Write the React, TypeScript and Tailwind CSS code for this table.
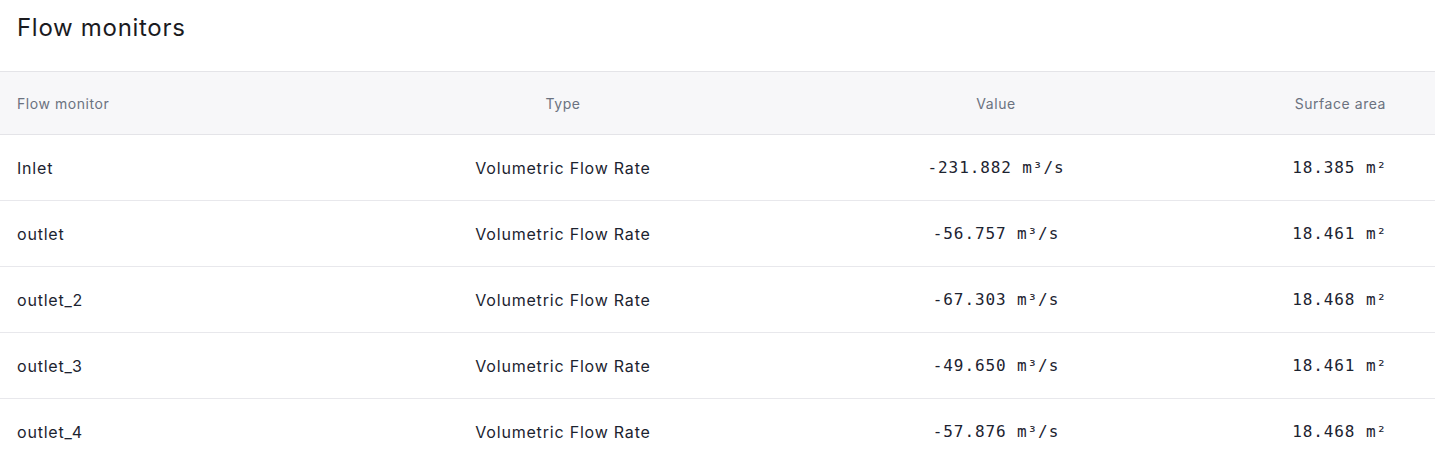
import React from "react";

const rows = [
  { name: "Inlet", type: "Volumetric Flow Rate", value: "-231.882 m³/s", area: "18.385 m²" },
  { name: "outlet", type: "Volumetric Flow Rate", value: "-56.757 m³/s", area: "18.461 m²" },
  { name: "outlet_2", type: "Volumetric Flow Rate", value: "-67.303 m³/s", area: "18.468 m²" },
  { name: "outlet_3", type: "Volumetric Flow Rate", value: "-49.650 m³/s", area: "18.461 m²" },
  { name: "outlet_4", type: "Volumetric Flow Rate", value: "-57.876 m³/s", area: "18.468 m²" },
];

const grid = "grid grid-cols-[400px_326px_540px_1fr] items-center";
const mono = "font-['DejaVu_Sans_Mono',monospace] text-[16px] tracking-[0.9px]";

export default function App() {
  return (
    <div className="w-[1435px] h-[461px] overflow-hidden bg-white font-['Inter',sans-serif] text-[#1c2330]">
      <h1 className="px-[17px] pt-[13px] h-[71px] text-[24px] leading-[30px] tracking-[0.7px] text-[#1b1b1f]">Flow monitors</h1>
      <div className={`${grid} h-[64px] bg-[#f7f7f9] border-y border-[#e4e4e8] text-[14px] tracking-[0.55px] text-[#6b7280]`}>
        <div className="pl-[17px]">Flow monitor</div>
        <div className="text-center">Type</div>
        <div className="text-center">Value</div>
        <div className="text-right pr-[49px]">Surface area</div>
      </div>
      {rows.map((r) => (
        <div key={r.name} className={`${grid} h-[66px] border-b border-[#e8e8ec] text-[16px] tracking-[0.8px]`}>
          <div className="pl-[17px]">{r.name}</div>
          <div className="text-center">{r.type}</div>
          <div className={`text-center ${mono}`}>{r.value}</div>
          <div className={`text-right pr-[48px] ${mono}`}>{r.area}</div>
        </div>
      ))}
    </div>
  );
}
